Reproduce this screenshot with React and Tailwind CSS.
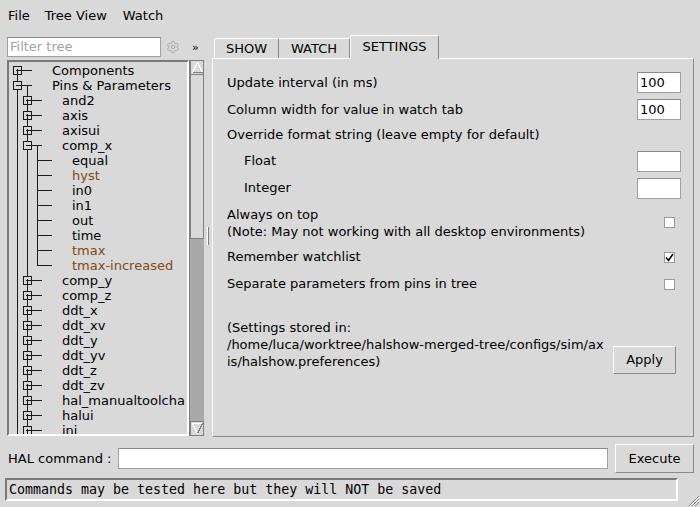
import { Settings } from 'lucide-react';

// Tree rows shown in the left pane (level 1 = root)
const TREE = [
  { label: 'Components', level: 1, box: '+', first: true },
  { label: 'Pins & Parameters', level: 1, box: '-' },
  { label: 'and2', level: 2, box: '+' },
  { label: 'axis', level: 2, box: '+' },
  { label: 'axisui', level: 2, box: '+' },
  { label: 'comp_x', level: 2, box: '-' },
  { label: 'equal', level: 3, first: true },
  { label: 'hyst', level: 3, param: true },
  { label: 'in0', level: 3 },
  { label: 'in1', level: 3 },
  { label: 'out', level: 3 },
  { label: 'time', level: 3 },
  { label: 'tmax', level: 3, param: true },
  { label: 'tmax-increased', level: 3, param: true, last: true },
  { label: 'comp_y', level: 2, box: '+' },
  { label: 'comp_z', level: 2, box: '+' },
  { label: 'ddt_x', level: 2, box: '+' },
  { label: 'ddt_xv', level: 2, box: '+' },
  { label: 'ddt_y', level: 2, box: '+' },
  { label: 'ddt_yv', level: 2, box: '+' },
  { label: 'ddt_z', level: 2, box: '+' },
  { label: 'ddt_zv', level: 2, box: '+' },
  { label: 'hal_manualtoolcha', level: 2, box: '+' },
  { label: 'halui', level: 2, box: '+' },
  { label: 'ini', level: 2, box: '+' },
];

// connector lines + expand box for one row
function TreeGutter({ level, box, first, last }) {
  const w = level * 10 + 33;
  const c = level * 10 - 1.5;
  const ancestors = [];
  for (let k = 1; k < level; k++) {
    ancestors.push(<line key={k} x1={k * 10 - 1.5} y1={0} x2={k * 10 - 1.5} y2={15} />);
  }
  // the first root row starts its line at the box, children start at the parent connector
  const y1 = first && level === 1 ? 7.5 : 0;
  const y2 = last ? 7.5 : 15;
  return (
    <svg width={w} height={15} className="shrink-0" stroke="#1a1a1a" strokeWidth="1" shapeRendering="crispEdges">
      {ancestors}
      <line x1={c} y1={y1} x2={c} y2={y2} />
      <line x1={c} y1={7.5} x2={c + 14.5} y2={7.5} />
      {box === '-' && <line x1={c + 10} y1={7.5} x2={c + 10} y2={15} />}
      {box && (
        <g>
          <rect x={c - 4} y={3.5} width={8} height={8} fill="#d9d9d9" />
          <line x1={c - 2} y1={7.5} x2={c + 3} y2={7.5} />
          {box === '+' && <line x1={c} y1={5.5} x2={c} y2={10.5} />}
        </g>
      )}
    </svg>
  );
}

function ScrollArrow({ up }) {
  return (
    <div className="h-[15px] w-full flex items-center justify-center border border-[#7f7f7f] bg-[#d9d9d9]">
      <svg width="11" height="11" shapeRendering="crispEdges">
        {up ? (
          <polygon points="5.5,0.5 10.5,10.5 0.5,10.5" fill="#d9d9d9" stroke="#ffffff" />
        ) : (
          <polygon points="0.5,0.5 10.5,0.5 5.5,10.5" fill="#d9d9d9" stroke="#ffffff" />
        )}
        {up ? (
          <polyline points="10.5,10.5 0.5,10.5" fill="none" stroke="#7f7f7f" />
        ) : (
          <polyline points="10.5,0.5 5.5,10.5" fill="none" stroke="#7f7f7f" />
        )}
      </svg>
    </div>
  );
}

function Entry({ value, className = '' }) {
  return (
    <div className={`h-[21px] bg-white border border-[#a0a0a0] border-t-[#8a8a8a] pl-[2px] leading-[19px] ${className}`}>
      {value}
    </div>
  );
}

function CheckBox({ checked }) {
  return (
    <div className="w-[11px] h-[11px] bg-white border border-[#9a9a9a] mr-[6px] shrink-0 flex items-center justify-center">
      {checked && (
        <svg width="9" height="9" viewBox="0 0 9 9">
          <path d="M1 4.5 L3.5 7.5 L8 1" fill="none" stroke="#000" strokeWidth="1.6" />
        </svg>
      )}
    </div>
  );
}

export default function App() {
  return (
    <div className="w-[700px] h-[507px] bg-[#d9d9d9] text-black text-[13px] font-['DejaVu_Sans',sans-serif] flex flex-col overflow-hidden select-none">
      {/* Menu bar */}
      <div className="h-[30px] flex items-center pl-[1px] pt-[1px]">
        <span className="px-[7px]">File</span>
        <span className="px-[7px] ml-[1px]">Tree View</span>
        <span className="px-[7px] ml-[2px]">Watch</span>
      </div>

      <div className="flex h-[402px] mt-[5px]">
        {/* Left pane: filter + tree */}
        <div className="pl-[7px] w-[204px] flex flex-col">
          <div className="flex items-center h-[20px] mt-[2px]">
            <div className="w-[154px] h-[20px] bg-white border border-[#a0a0a0] border-t-[#888] pl-[2px] leading-[18px] text-[#a3a3a3]">
              Filter tree
            </div>
            <Settings size={14} strokeWidth={1.5} className="ml-[5px] text-[#a6a6a6]" />
            <span className="ml-[12px] text-[11px] leading-none">»</span>
          </div>
          <div className="flex mt-[3px] h-[376px]">
            <div className="w-[182px] h-full pt-[1px] border-2 border-t-[#7a7a7a] border-l-[#7a7a7a] border-b-white border-r-white overflow-hidden">
              {TREE.map((row) => (
                <div key={row.label} className="flex h-[15px] items-center">
                  <TreeGutter {...row} />
                  <span className={`leading-[15px] whitespace-nowrap ${row.param ? 'text-[#7c4a1a]' : 'text-black'}`}>
                    {row.label}
                  </span>
                </div>
              ))}
            </div>
            {/* vertical scrollbar */}
            <div className="w-[15px] h-full flex flex-col bg-[#a9a9a9] border-l border-[#7f7f7f]">
              <ScrollArrow up />
              <div className="h-[164px] bg-[#d9d9d9] border-x border-b border-[#7f7f7f]" />
              <div className="flex-1" />
              <ScrollArrow />
            </div>
          </div>
        </div>

        {/* Pane sash */}
        <div className="w-[8px] flex items-center pl-[3px]">
          <div className="w-[2px] h-[18px] border-l border-white border-r border-r-[#7f7f7f]" />
        </div>

        {/* Notebook */}
        <div className="w-[482px] flex flex-col">
          <div className="h-[23px] flex items-end pl-[2px]">
            <div className="w-[65px] h-[20px] flex items-center justify-center border-l border-t border-white border-r border-r-[#8a8a8a] rounded-t-[2px]">
              SHOW
            </div>
            <div className="w-[71px] h-[20px] flex items-center justify-center border-t border-white border-r border-r-[#8a8a8a] rounded-t-[2px]">
              WATCH
            </div>
            <div className="relative z-10 -mb-px w-[89px] h-[24px] pb-[2px] flex items-center justify-center bg-[#d9d9d9] border-l border-t border-white border-r border-r-[#8a8a8a] rounded-t-[2px]">
              SETTINGS
            </div>
          </div>
          <div className="h-[379px] border border-l-white border-t-white border-r-[#8a8a8a] border-b-[#8a8a8a] pl-[14px] pr-[12px] pt-[10px]">
            <div className="h-[27px] flex items-center justify-between">
              <span>Update interval (in ms)</span>
              <Entry value="100" className="w-[44px]" />
            </div>
            <div className="h-[27px] flex items-center justify-between">
              <span>Column width for value in watch tab</span>
              <Entry value="100" className="w-[44px]" />
            </div>
            <div className="h-[24px] flex items-center">
              <span>Override format string (leave empty for default)</span>
            </div>
            <div className="h-[28px] flex items-center justify-between">
              <span className="ml-[17px]">Float</span>
              <Entry value="" className="w-[44px]" />
            </div>
            <div className="h-[26px] flex items-center justify-between">
              <span className="ml-[17px]">Integer</span>
              <Entry value="" className="w-[44px]" />
            </div>
            <div className="h-[43px] flex items-center justify-between">
              <div className="leading-[17px]">
                <div>Always on top</div>
                <div>(Note: May not working with all desktop environments)</div>
              </div>
              <CheckBox />
            </div>
            <div className="h-[26px] flex items-center justify-between">
              <span>Remember watchlist</span>
              <CheckBox checked />
            </div>
            <div className="h-[28px] flex items-center justify-between">
              <span>Separate parameters from pins in tree</span>
              <CheckBox />
            </div>
            <div className="mt-[21px] flex items-start justify-between">
              <div className="leading-[17px] whitespace-nowrap">
                <div>(Settings stored in:</div>
                <div>/home/luca/worktree/halshow-merged-tree/configs/sim/ax</div>
                <div>is/halshow.preferences)</div>
              </div>
              <div className="mt-[27px] mr-[5px] w-[63px] h-[28px] flex items-center justify-center border border-t-white border-l-white border-r-[#8a8a8a] border-b-[#8a8a8a]">
                Apply
              </div>
            </div>
          </div>
        </div>
      </div>

      {/* HAL command row */}
      <div className="mt-[7px] h-[29px] flex items-center pl-[8px]">
        <span className="w-[110px] shrink-0">HAL command :</span>
        <div className="w-[490px] h-[21px] bg-white border border-[#a0a0a0] border-t-[#888]" />
        <div className="ml-[7px] w-[79px] h-[29px] flex items-center justify-center border border-t-white border-l-white border-r-[#8a8a8a] border-b-[#8a8a8a]">
          Execute
        </div>
      </div>

      {/* status line */}
      <div className="mt-[5px] h-[29px] flex">
        <div className="ml-[5px] w-[673px] h-[23px] border-2 border-t-[#7a7a7a] border-l-[#7a7a7a] border-b-white border-r-white pl-[2px] flex items-center font-['DejaVu_Sans_Mono',monospace] text-[13.3px] whitespace-nowrap">
          Commands may be tested here but they will NOT be saved
        </div>
        <div className="flex-1 flex items-end justify-end">
          <svg width="12" height="12" shapeRendering="crispEdges">
            <line x1="11" y1="1" x2="1" y2="11" stroke="#8a8a8a" />
            <line x1="11" y1="4" x2="4" y2="11" stroke="#8a8a8a" />
            <line x1="11" y1="7" x2="7" y2="11" stroke="#8a8a8a" />
            <line x1="11" y1="2" x2="2" y2="11" stroke="#ffffff" />
            <line x1="11" y1="5" x2="5" y2="11" stroke="#ffffff" />
          </svg>
        </div>
      </div>
    </div>
  );
}
